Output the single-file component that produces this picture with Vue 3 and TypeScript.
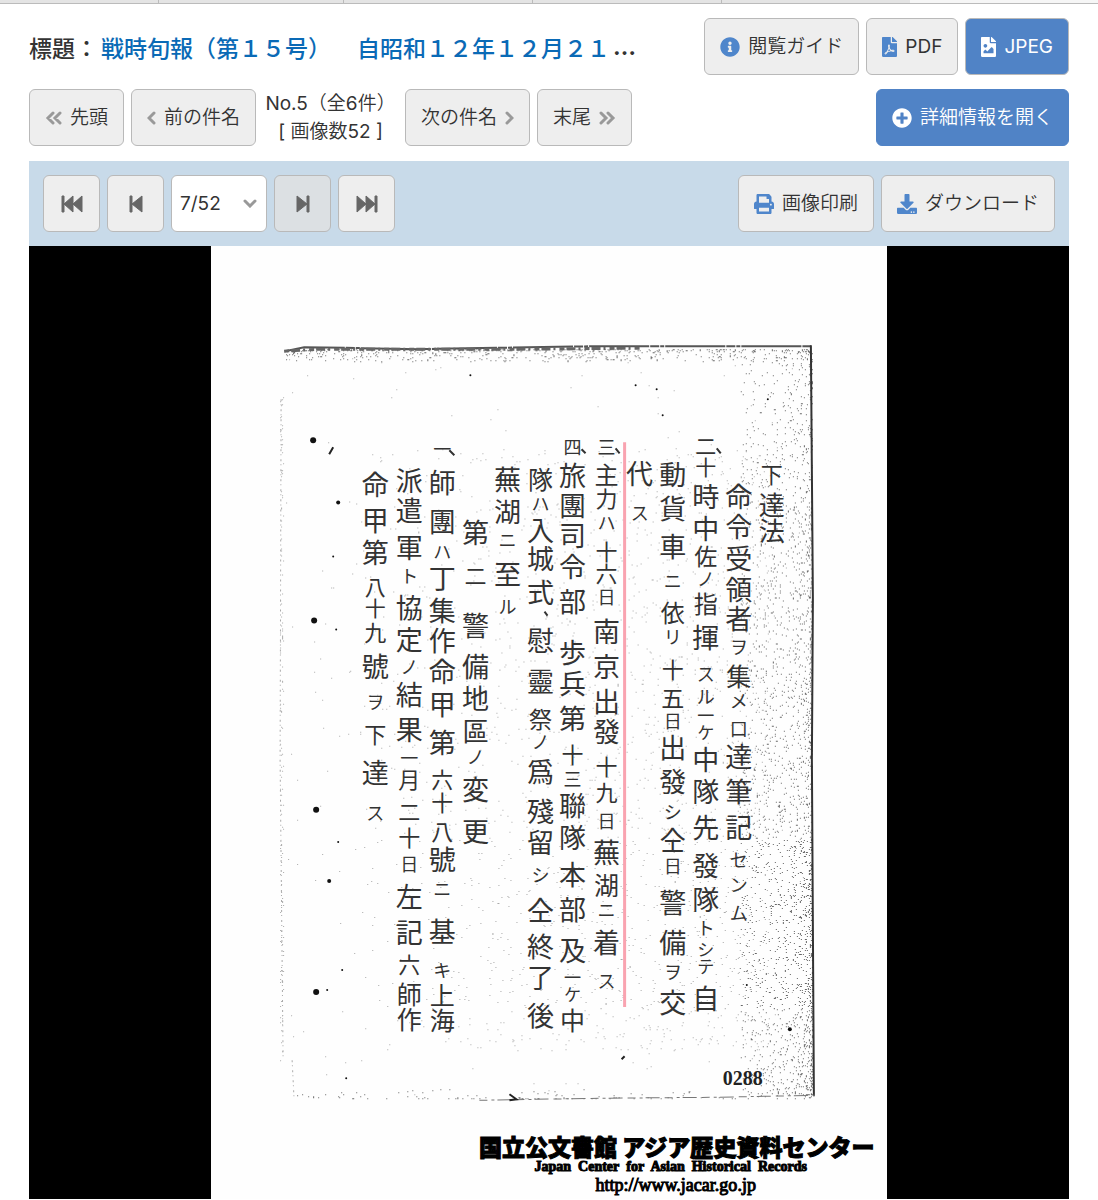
<script setup lang="ts">
import { computed, ref } from 'vue'

interface Glyph { char: string; y: number; size: number }
interface Column { x: number; glyphs: Glyph[] }

const icons = {
  info: { box: '0 0 512 512', d: 'M256 8C119.043 8 8 119.083 8 256c0 136.997 111.043 248 248 248s248-111.003 248-248C504 119.083 392.957 8 256 8zm0 110c23.196 0 42 18.804 42 42s-18.804 42-42 42-42-18.804-42-42 18.804-42 42-42zm56 254c0 6.627-5.373 12-12 12h-88c-6.627 0-12-5.373-12-12v-24c0-6.627 5.373-12 12-12h12v-64h-12c-6.627 0-12-5.373-12-12v-24c0-6.627 5.373-12 12-12h64c6.627 0 12 5.373 12 12v100h12c6.627 0 12 5.373 12 12v24z' },
  pdf: { box: '0 0 384 512', d: 'M181.9 256.1c-5-16-4.9-46.9-2-46.9 8.4 0 7.6 36.9 2 46.9zm-1.7 47.2c-7.7 20.2-17.3 43.3-28.4 62.7 18.3-7 39-17.2 62.9-21.9-12.7-9.6-24.9-23.4-34.5-40.8zM86.1 428.1c0 .8 13.2-5.4 34.9-40.2-6.7 6.3-29.1 24.5-34.9 40.2zM248 160h136v328c0 13.3-10.7 24-24 24H24c-13.3 0-24-10.7-24-24V24C0 10.7 10.7 0 24 0h200v136c0 13.2 10.8 24 24 24zm-8 171.8c-20-12.2-33.3-29-42.7-53.8 4.5-18.5 11.6-46.6 6.2-64.2-4.7-29.4-42.4-26.5-47.8-6.8-5 18.3-.4 44.1 8.1 77-11.6 27.6-28.7 64.6-40.8 85.8-.1 0-.1.1-.2.1-27.1 13.9-73.6 44.5-54.5 68 5.6 6.9 16 10 21.5 10 17.9 0 35.7-18 61.1-61.8 25.8-8.5 54.1-19.1 79-23.2 21.7 11.8 47.1 19.5 64 19.5 29.2 0 31.2-32 19.7-43.4-13.9-13.6-54.3-9.7-73.6-7.2zM377 105L279 7c-4.5-4.5-10.6-7-17-7h-6v128h128v-6.1c0-6.3-2.5-12.4-7-16.9zm-74.1 255.3c4.1-2.7-2.5-11.9-42.8-9 37.1 15.8 42.8 9 42.8 9z' },
  image: { box: '0 0 384 512', d: 'M384 121.941V128H256V0h6.059a24 24 0 0 1 16.97 7.029l97.941 97.941a24.002 24.002 0 0 1 7.03 16.971zM248 160c-13.2 0-24-10.8-24-24V0H24C10.745 0 0 10.745 0 24v464c0 13.255 10.745 24 24 24h336c13.255 0 24-10.745 24-24V160H248zm-135.455 16c26.51 0 48 21.49 48 48s-21.49 48-48 48-48-21.49-48-48 21.491-48 48-48zm208 240h-256l.485-48.485L104.545 328c4.686-4.686 11.799-4.201 16.485.485L160.545 368 264.06 264.485c4.686-4.686 12.284-4.686 16.971 0L320.545 304v112z' },
  plus: { box: '0 0 512 512', d: 'M256 8C119 8 8 119 8 256s111 248 248 248 248-111 248-248S393 8 256 8zm144 276c0 6.6-5.4 12-12 12h-92v92c0 6.6-5.4 12-12 12h-56c-6.6 0-12-5.4-12-12v-92h-92c-6.6 0-12-5.4-12-12v-56c0-6.6 5.4-12 12-12h92v-92c0-6.6 5.4-12 12-12h56c6.6 0 12 5.4 12 12v92h92c6.6 0 12 5.4 12 12v56z' },
  print: { box: '0 0 512 512', d: 'M448 192V77.25c0-8.49-3.37-16.62-9.37-22.63L393.37 9.37c-6-6-14.14-9.37-22.63-9.37H96C78.33 0 64 14.33 64 32v160c-35.35 0-64 28.65-64 64v112c0 8.84 7.16 16 16 16h48v96c0 17.67 14.33 32 32 32h320c17.67 0 32-14.33 32-32v-96h48c8.84 0 16-7.16 16-16V256c0-35.35-28.65-64-64-64zm-64 256H128v-96h256v96zm0-224H128V64h192v48c0 8.84 7.16 16 16 16h48v96zm48 72c-13.25 0-24-10.75-24-24 0-13.26 10.75-24 24-24s24 10.74 24 24c0 13.25-10.75 24-24 24z' },
  download: { box: '0 0 512 512', d: 'M216 0h80c13.3 0 24 10.7 24 24v168h87.7c17.8 0 26.7 21.5 14.1 34.1L269.7 378.3c-7.5 7.5-19.8 7.5-27.3 0L90.1 226.1c-12.6-12.6-3.7-34.1 14.1-34.1H192V24c0-13.3 10.7-24 24-24zm296 376v112c0 13.3-10.7 24-24 24H24c-13.3 0-24-10.7-24-24V376c0-13.3 10.7-24 24-24h146.7l49 49c20.1 20.1 52.5 20.1 72.6 0l49-49H488c13.3 0 24 10.7 24 24zm-124 88c0-11-9-20-20-20s-20 9-20 20 9 20 20 20 20-9 20-20zm64 0c0-11-9-20-20-20s-20 9-20 20 9 20 20 20 20-9 20-20z' },
}

const total = 52
const page = ref(7)
const pages = computed(() => Array.from({ length: total }, (_, i) => i + 1))
function go(to: number) {
  page.value = Math.min(total, Math.max(1, to))
}

/* Handwritten columns, right to left; every character carries the height of its centre. */
const transcript: [number, string, number[]][] = [
  [772, '下達法', [476, 506, 532]],
  [739, '命令受領者ヲ集メ口達筆記センム', [498, 528, 560, 590, 619, 647, 676, 701, 729, 757, 792, 828, 860, 885, 913]],
  [706, '二十時中佐ノ指揮スル一ケ中隊先發隊トシテ自', [447, 468, 498, 530, 557, 580, 604, 638, 674, 697, 716, 733, 760, 792, 828, 866, 900, 928, 950, 967, 999]],
  [673, '動貨車ニ依リ十五日出發シ仝日警備ヲ交', [476, 510, 548, 582, 613, 637, 670, 698, 721, 748, 782, 812, 840, 866, 903, 943, 972, 1003]],
  [640, '代ス', [475, 514]],
  [607, '三主力ハ十六日南京出發十九日蕪湖ニ着ス', [448, 476, 500, 524, 553, 575, 597, 632, 667, 702, 732, 767, 793, 821, 853, 885, 910, 943, 981]],
  [573, '四旅團司令部歩兵第十三聯隊本部及一ケ中', [448, 477, 507, 537, 568, 602, 653, 684, 719, 755, 779, 806, 838, 875, 910, 951, 978, 995, 1020]],
  [541, '隊ハ入城式慰靈祭ノ爲殘留シ仝終了後', [480, 505, 532, 560, 593, 641, 682, 719, 742, 772, 812, 843, 875, 911, 947, 978, 1016]],
  [508, '蕪湖ニ至ル', [481, 513, 541, 576, 607]],
  [476, '第二警備地區ノ変更', [534, 577, 626, 667, 699, 731, 757, 790, 832]],
  [443, '一師團ハ丁集作命甲第六十八號ニ基キ上海', [450, 484, 523, 553, 580, 611, 641, 672, 705, 743, 780, 803, 832, 860, 889, 932, 970, 995, 1020]],
  [410, '派遣軍ト協定ノ結果一月二十日左記六師作', [482, 512, 549, 577, 608, 640, 667, 695, 730, 758, 780, 812, 838, 864, 897, 933, 965, 994, 1019]],
  [376, '命甲第八十九號ヲ下達ス', [486, 522, 554, 587, 608, 633, 667, 702, 735, 773, 813]],
]
const small = 'ヲメセンムノスルケトシテニリハキ日口一三四'
const medium = '二十六九八下力'

const columns: Column[] = transcript.map(([x, text, ys]) => ({
  x,
  glyphs: [...text].map((char, i) => {
    const room = Math.min(ys[i] - (ys[i - 1] ?? 0), (ys[i + 1] ?? 2000) - ys[i])
    const base = small.includes(char) ? 18 : medium.includes(char) ? 22 : 27
    const size = Math.min(base, Math.max(16, room))
    return { char, size, y: Math.round(ys[i] + size * 0.38) }
  }),
}))

/* Grain of the photocopy, from a fixed seed. */
let seed = 20371
function rnd(): number {
  seed = (seed * 48271) % 2147483647
  return seed / 2147483647
}
function dots(count: number, place: () => [number, number]): string {
  let path = ''
  for (let i = 0; i < count; i++) {
    const [x, y] = place()
    path += `M${Math.round(x)} ${Math.round(y)}h1v1h-1z`
  }
  return path
}
const grainEdge = dots(2600, () => [812 - 72 * Math.pow(rnd(), 2), 352 + 744 * Math.pow(rnd(), 0.8)])
const grainText = dots(1900, () => [350 + 420 * Math.pow(rnd(), 0.6), 450 + 600 * rnd()])
const grainPage = dots(330, () => [286 + 520 * rnd(), 355 + 740 * rnd()])
const grainTop = dots(620, () => [286 + 524 * rnd(), 350 + 12 * Math.pow(rnd(), 2)])
const grainLeft = dots(130, () => [281 + 3 * rnd(), 390 + 680 * rnd()])
const grainBottom = dots(110, () => [292 + 520 * rnd(), 1098 - 10 * Math.pow(rnd(), 3)])
</script>

<template>
  <div class="tabs"><i></i><i></i><i></i><i></i><i></i><i class="open"></i></div>
  <main class="viewer">
    <header class="row heading">
      <h1>
        <span>標題：</span>
        <a href="#record"><span>戦時旬報（第１５号）</span><span>　自昭和１２年１２月２１</span></a>
        <span class="more">…</span>
      </h1>
      <div class="group">
        <button type="button" class="btn"><svg class="icon wide" :viewBox="icons.info.box"><path :d="icons.info.d" /></svg>閲覧ガイド</button>
        <button type="button" class="btn"><svg class="icon" :viewBox="icons.pdf.box"><path :d="icons.pdf.d" /></svg>PDF</button>
        <button type="button" class="btn primary"><svg class="icon" :viewBox="icons.image.box"><path :d="icons.image.d" /></svg>JPEG</button>
      </div>
    </header>

    <nav class="row">
      <div class="group">
        <button type="button" class="btn"><svg class="chev double" viewBox="0 0 17 14"><path d="M8 2 3 7l5 5M15 2l-5 5 5 5" /></svg>先頭</button>
        <button type="button" class="btn"><svg class="chev" viewBox="0 0 9 14"><path d="M7 2 2 7l5 5" /></svg>前の件名</button>
        <p class="count">No.5（全6件）<br />[ 画像数52 ]</p>
        <button type="button" class="btn">次の件名<svg class="chev" viewBox="0 0 9 14"><path d="m2 2 5 5-5 5" /></svg></button>
        <button type="button" class="btn">末尾<svg class="chev double" viewBox="0 0 17 14"><path d="m2 2 5 5-5 5M9 2l5 5-5 5" /></svg></button>
      </div>
      <button type="button" class="btn primary plain"><svg class="icon wide" :viewBox="icons.plus.box"><path :d="icons.plus.d" /></svg>詳細情報を開く</button>
    </nav>

    <section class="panel">
      <div class="row toolbar">
        <div class="group">
          <button type="button" class="btn square" aria-label="最初の画像" @click="go(1)"><svg class="media" viewBox="0 0 22 18"><path d="M1 1h2v16H1zM12 1v16L3 9zM21 1v16l-9-8z" /></svg></button>
          <button type="button" class="btn square" aria-label="前の画像" @click="go(page - 1)"><svg class="media" viewBox="0 0 22 18"><path d="M5 1h2v16H5zM17 1v16L7 9z" /></svg></button>
          <div class="picker">
            <select v-model="page" aria-label="画像番号">
              <option v-for="n in pages" :key="n" :value="n">{{ n }}/{{ total }}</option>
            </select>
            <svg class="chev arrow" viewBox="0 0 14 9"><path d="m2 2 5 5 5-5" /></svg>
          </div>
          <button type="button" class="btn square active" aria-label="次の画像" @click="go(page + 1)"><svg class="media" viewBox="0 0 22 18"><path d="M5 1v16l10-8zM15 1h2v16h-2z" /></svg></button>
          <button type="button" class="btn square" aria-label="最後の画像" @click="go(total)"><svg class="media" viewBox="0 0 22 18"><path d="M1 1v16l9-8zM10 1v16l9-8zM19 1h2v16h-2z" /></svg></button>
        </div>
        <div class="group">
          <button type="button" class="btn"><svg class="icon wide" :viewBox="icons.print.box"><path :d="icons.print.d" /></svg>画像印刷</button>
          <button type="button" class="btn"><svg class="icon wide" :viewBox="icons.download.box"><path :d="icons.download.d" /></svg>ダウンロード</button>
        </div>
      </div>

      <div class="stage">
        <svg class="scan" viewBox="212 247 675 952">
          <path class="faint" :d="grainPage + grainText + grainLeft" />
          <path class="grain" :d="grainEdge + grainTop + grainBottom" />
          <path class="edge top" d="M286 352 305 348 420 350 600 347 811 347" />
          <path class="edge thin" d="M285 352 320 350 520 350 640 349" />
          <path class="edge side" d="M811 346 813 600 812 760 814 1096" />
          <path class="edge dashed" d="M480 1100 600 1098 720 1097 815 1095" />
          <path class="edge dashed left" d="M282 400 281 760 284 1060M293 1060 295 1100" />
          <g class="holes">
            <circle cx="314" cy="441" r="3" /><circle cx="315" cy="621" r="3" />
            <circle cx="317" cy="810" r="3" /><circle cx="317" cy="992" r="3" />
            <circle cx="339" cy="503" r="2" /><circle cx="334" cy="557" r="1" />
            <circle cx="337" cy="630" r="1" /><circle cx="339" cy="842" r="1" />
            <circle cx="330" cy="881" r="2" /><circle cx="343" cy="970" r="1" />
            <circle cx="328" cy="990" r="1" /><circle cx="471" cy="376" r="1" />
            <circle cx="657" cy="390" r="1" /><circle cx="636" cy="386" r="1" />
            <circle cx="663" cy="416" r="1" /><circle cx="768" cy="400" r="1" />
            <circle cx="790" cy="1029" r="2" /><circle cx="747" cy="985" r="1" />
            <circle cx="347" cy="1078" r="1" />
            <path d="m330 455 4-7M510 1094l7 5-7 1M622 1059l3-3" />
          </g>
          <path class="mark" d="M625 443V1007" />
          <text v-for="col in columns" :key="col.x" class="hand">
            <tspan v-for="(g, i) in col.glyphs" :key="i" :x="col.x" :y="g.y" :font-size="g.size">{{ g.char }}</tspan>
          </text>
          <path class="stroke" d="m717 449 4 5M616 449l4 5M582 450l4 4M450 451l5 5M545 612l3 4" />
          <text class="number" x="743" y="1085">0288</text>
          <text class="stamp" x="677" y="1156">国立公文書館 アジア歴史資料センター</text>
          <text class="stamp latin" x="671" y="1171">Japan&#160; Center&#160; for&#160; Asian&#160; Historical&#160; Records</text>
          <text class="stamp url" x="676" y="1191">http://www.jacar.go.jp</text>
        </svg>
      </div>
    </section>
  </main>
</template>

<style>
body {
  margin: 0;
  background: #fff;
}
</style>

<style scoped>
.tabs {
  display: flex;
  height: 3px;
  border-bottom: 1px solid #bbb;
}
.tabs i {
  flex: 188 1 0;
  background: #e4e4e4;
  border-right: 1px solid #bbb;
}
.tabs i:first-child {
  flex-grow: 158;
}
.tabs i:nth-child(2) {
  flex-grow: 184;
}
.tabs i:nth-child(5) {
  border-right: 0;
}
.tabs .open {
  background: #f6f6f6;
  border-right: 0;
}
.viewer {
  padding: 14px 29px 0;
  color: #333;
  font: 400 19px/28px Inter, "Noto Sans CJK JP DemiLight", "Noto Sans CJK JP", sans-serif;
}
.row {
  display: flex;
  justify-content: space-between;
  align-items: center;
  margin-bottom: 15px;
}
.heading {
  margin-bottom: 14px;
}
.group {
  display: flex;
  align-items: center;
  gap: 7px;
}
h1 {
  display: flex;
  gap: 3px;
  margin: 0;
  font: 500 23px/32px "Noto Sans CJK JP", sans-serif;
  white-space: nowrap;
}
h1 a {
  display: flex;
  gap: 3px;
  color: #0a6ab6;
  text-decoration: none;
}
.more {
  font-family: Inter, sans-serif;
  font-weight: 700;
}
.btn {
  display: flex;
  align-items: center;
  justify-content: center;
  gap: 8px;
  box-sizing: border-box;
  height: 57px;
  padding: 0 15px;
  border: 1px solid #b9b9b9;
  border-radius: 6px;
  background: #eee;
  color: #333;
  font: inherit;
  white-space: nowrap;
}
.primary {
  background: #5083c6;
  color: #fff;
}
.plain {
  border-color: #5083c6;
}
.square {
  width: 57px;
  padding: 0;
}
.active {
  background: #dce0e3;
}
.icon {
  width: 15px;
  height: 20px;
  fill: #4f86cb;
}
.wide {
  width: 20px;
}
.primary .icon {
  fill: #fff;
}
.chev {
  width: 9px;
  height: 14px;
  fill: none;
  stroke: #999;
  stroke-width: 3;
  stroke-linecap: round;
}
.double {
  width: 17px;
}
.media {
  width: 22px;
  height: 18px;
  fill: #666;
  stroke: #666;
  stroke-width: 1;
  stroke-linejoin: round;
}
.count {
  width: 135px;
  margin: 0;
  text-align: center;
}
.panel {
  background: #c8dae9;
}
.toolbar {
  margin: 0;
  padding: 14px;
}
.picker {
  display: grid;
  align-items: center;
}
.picker > * {
  grid-area: 1 / 1;
}
select {
  width: 96px;
  height: 57px;
  padding: 0 8px;
  border: 1px solid #b9b9b9;
  border-radius: 6px;
  background: #fff;
  color: #333;
  font: 400 19px/28px Inter, sans-serif;
  appearance: none;
}
.arrow {
  width: 14px;
  height: 9px;
  margin-right: 10px;
  justify-self: end;
  pointer-events: none;
}
.stage {
  display: flex;
  justify-content: center;
  background: #000;
}
.scan {
  width: 65%;
  background: #fefefe;
}
.grain {
  fill: #666;
}
.faint {
  fill: #aaa;
}
.edge {
  fill: none;
  stroke: #333;
  stroke-width: 2;
}
.top {
  stroke: #555;
  stroke-dasharray: 60 1 9 1 4 1;
}
.thin {
  stroke-width: 3;
  stroke-dasharray: 5 2 9 3 2 4;
  stroke: #666;
}
.dashed {
  stroke: #777;
  stroke-width: 1;
  stroke-dasharray: 8 4 3 3 14 5;
}
.left {
  stroke: #aaa;
  stroke-dasharray: 2 3 1 4;
}
.holes {
  fill: #111;
}
.holes path {
  fill: none;
  stroke: #222;
  stroke-width: 2;
}
.mark {
  stroke: #f9a3b0;
  stroke-width: 3;
}
.hand {
  fill: #333;
  font-family: "Noto Sans CJK JP", sans-serif;
  font-weight: 400;
  text-anchor: middle;
}
.stroke {
  stroke: #333;
  stroke-width: 2;
}
.number {
  fill: #222;
  font: 700 20px "Liberation Serif", serif;
  text-anchor: middle;
}
.stamp {
  fill: #000;
  stroke: #000;
  stroke-width: 1;
  font: 900 23px "Noto Sans CJK JP", sans-serif;
  text-anchor: middle;
}
.latin {
  font: 700 14px "Liberation Serif", serif;
}
.url {
  font: 400 18px "Liberation Serif", serif;
}
</style>
